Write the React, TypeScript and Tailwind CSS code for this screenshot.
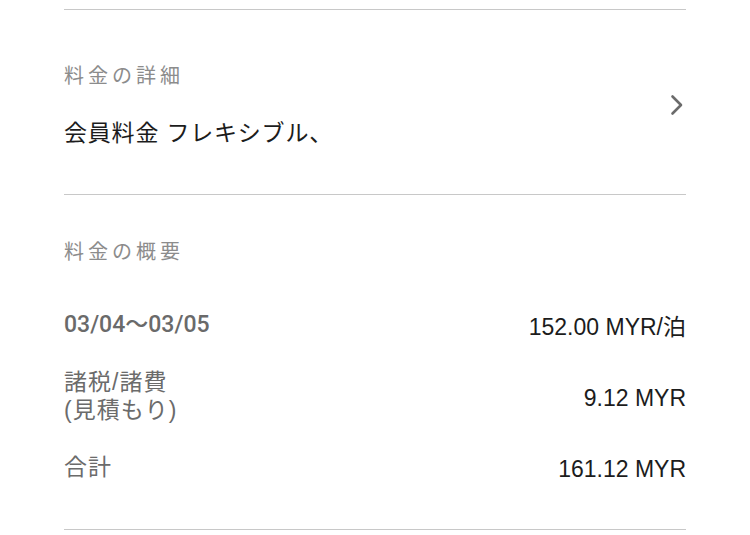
import React from 'react';

const FONT = "font-['Liberation_Sans','Noto_Sans_CJK_JP',sans-serif]";

const Chevron: React.FC = () => (
  <svg width="14" height="22" viewBox="0 0 14 22" fill="none" className="shrink-0">
    <path d="M2.5 2.5L11 11L2.5 19.5" stroke="#6b6b6b" strokeWidth="2.6" strokeLinecap="round" strokeLinejoin="round" />
  </svg>
);

const rows = [
  { label: ['03/04〜03/05'], value: '152.00 MYR/泊', date: true },
  { label: ['諸税/諸費', '(見積もり)'], value: '9.12 MYR' },
  { label: ['合計'], value: '161.12 MYR' },
];

const App: React.FC = () => {
  return (
    <div className={`w-[750px] h-[535px] bg-white pt-[9px] px-[64px] ${FONT}`}>
      {/* Rate details */}
      <section className="border-t border-[#c8c8c8] flex items-center justify-between pt-[52px] pb-[46px] pr-[2px]">
        <div>
          <h2 className="text-[20px] leading-[28px] tracking-[4px] text-[#8c8c8c]">料金の詳細</h2>
          <p className="mt-[28px] text-[23px] leading-[30px] tracking-[0.8px] text-[#1c1c1c]">会員料金 フレキシブル、</p>
        </div>
        <Chevron />
      </section>

      {/* Rate summary */}
      <section className="border-t border-[#c8c8c8] pt-[43px] pb-[46px]">
        <h2 className="text-[20px] leading-[28px] tracking-[4px] text-[#8c8c8c]">料金の概要</h2>
        <div className="mt-[43px] flex flex-col gap-[27px]">
          {rows.map((row, i) => (
            <div key={i} className="flex items-center justify-between">
              <div
                className={
                  row.date
                    ? "font-['Roboto','Noto_Sans_CJK_JP',sans-serif] font-medium text-[23px] leading-[28px] text-[#6a6a6a]"
                    : 'text-[23px] leading-[28px] tracking-[1px] text-[#6b6b6b]'
                }
              >
                {row.label.map((l, j) => (
                  <div key={j}>{l}</div>
                ))}
              </div>
              <div className="text-[23px] leading-[28px] text-[#1c1c1c] pt-[4px]">{row.value}</div>
            </div>
          ))}
        </div>
      </section>
      <div className="border-t border-[#c8c8c8]" />
    </div>
  );
};

export default App;
